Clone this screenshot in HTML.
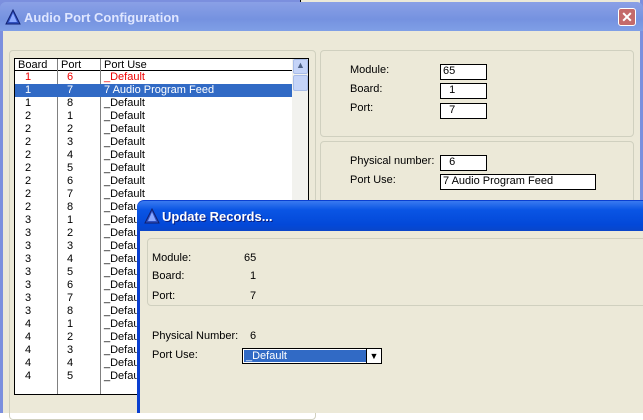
<!DOCTYPE html>
<html><head><style>
*{margin:0;padding:0;box-sizing:border-box}
body{width:643px;height:413px;overflow:hidden;background:#fff;font-family:"Liberation Sans",sans-serif;font-size:11px;position:relative}
.a{position:absolute}
.grp{position:absolute;border:1px solid #d0d0bf;border-radius:4px}
.inp{position:absolute;background:#fff;border:1px solid #000;padding-left:2px;line-height:13px;font-size:11px}
.row{position:absolute;left:0;width:278px;height:13px;line-height:13px}
.row span{position:absolute}
</style></head><body>
<div class="a" style="left:0;top:0;width:643px;height:413px;background:#7b8fde"></div>
<div class="a" style="left:300px;top:0;width:340px;height:3px;background:#ece9d8;border-left:1px solid #000"></div>
<div class="a" style="left:0;top:2px;width:643px;height:29px;background:linear-gradient(#8aa0e6,#7592e0 60%,#7f9fe6);border-radius:6px 6px 0 0"></div>
<svg class="a" style="left:5px;top:9px" width="16" height="16"><polygon points="8,1 15,15 1,15" fill="#3050c0" stroke="#102070"/><polygon points="8,4 12,13 4,13" fill="#8aa8ff"/></svg>
<div class="a" style="left:24px;top:10px;color:#dfe6ff;font-weight:bold;font-size:13px">Audio Port Configuration</div>
<div class="a" style="left:618px;top:8px;width:18px;height:18px;background:#c46a6a;border:1px solid #fff;border-radius:3px;color:#fff;text-align:center;line-height:16px;font-weight:bold;font-size:14px">✕</div>
<div class="a" style="left:3px;top:31px;width:637px;height:382px;background:#ece9d8"></div>
<div class="grp" style="left:9px;top:50px;width:307px;height:370px"></div>
<div class="a" style="left:14px;top:58px;width:295px;height:337px;background:#fff;border:1px solid #000"></div>
<div class="a" style="left:15px;top:59px;width:277px;height:12px;border-bottom:1px solid #000"></div>
<div class="a" style="left:57px;top:59px;width:1px;height:335px;background:#808080"></div>
<div class="a" style="left:100px;top:59px;width:1px;height:335px;background:#808080"></div>
<div class="a" style="left:18px;top:59px;line-height:12px">Board</div>
<div class="a" style="left:61px;top:59px;line-height:12px">Port</div>
<div class="a" style="left:104px;top:59px;line-height:12px">Port Use</div>
<div class="a" style="left:292px;top:59px;width:16px;height:335px;background:#f2f2ee"></div>
<div class="a" style="left:293px;top:59px;width:15px;height:15px;background:#c5d4f8;border:1px solid #a8bce8;border-radius:2px;font-size:9px;text-align:center;color:#4d6185">▲</div>
<div class="a" style="left:293px;top:75px;width:15px;height:16px;background:#c5d4f8;border:1px solid #a8bce8;border-radius:2px"></div>
<div class="a" style="left:15px;top:71px;width:277px;height:323px;overflow:hidden">
<div class="row" style="top:0;color:#e00"><span style="left:10px">1</span><span style="left:52px">6</span><span style="left:89px">_Default</span></div>
<div class="row" style="top:13px;background:#316ac5;color:#fff"><span style="left:10px">1</span><span style="left:52px">7</span><span style="left:89px">7 Audio Program Feed</span></div>
<div class="row" style="top:26px"><span style="left:10px">1</span><span style="left:52px">8</span><span style="left:89px">_Default</span></div>
<div class="row" style="top:39px"><span style="left:10px">2</span><span style="left:52px">1</span><span style="left:89px">_Default</span></div>
<div class="row" style="top:52px"><span style="left:10px">2</span><span style="left:52px">2</span><span style="left:89px">_Default</span></div>
<div class="row" style="top:65px"><span style="left:10px">2</span><span style="left:52px">3</span><span style="left:89px">_Default</span></div>
<div class="row" style="top:78px"><span style="left:10px">2</span><span style="left:52px">4</span><span style="left:89px">_Default</span></div>
<div class="row" style="top:91px"><span style="left:10px">2</span><span style="left:52px">5</span><span style="left:89px">_Default</span></div>
<div class="row" style="top:104px"><span style="left:10px">2</span><span style="left:52px">6</span><span style="left:89px">_Default</span></div>
<div class="row" style="top:117px"><span style="left:10px">2</span><span style="left:52px">7</span><span style="left:89px">_Default</span></div>
<div class="row" style="top:130px"><span style="left:10px">2</span><span style="left:52px">8</span><span style="left:89px">_Default</span></div>
<div class="row" style="top:143px"><span style="left:10px">3</span><span style="left:52px">1</span><span style="left:89px">_Default</span></div>
<div class="row" style="top:156px"><span style="left:10px">3</span><span style="left:52px">2</span><span style="left:89px">_Default</span></div>
<div class="row" style="top:169px"><span style="left:10px">3</span><span style="left:52px">3</span><span style="left:89px">_Default</span></div>
<div class="row" style="top:182px"><span style="left:10px">3</span><span style="left:52px">4</span><span style="left:89px">_Default</span></div>
<div class="row" style="top:195px"><span style="left:10px">3</span><span style="left:52px">5</span><span style="left:89px">_Default</span></div>
<div class="row" style="top:208px"><span style="left:10px">3</span><span style="left:52px">6</span><span style="left:89px">_Default</span></div>
<div class="row" style="top:221px"><span style="left:10px">3</span><span style="left:52px">7</span><span style="left:89px">_Default</span></div>
<div class="row" style="top:234px"><span style="left:10px">3</span><span style="left:52px">8</span><span style="left:89px">_Default</span></div>
<div class="row" style="top:247px"><span style="left:10px">4</span><span style="left:52px">1</span><span style="left:89px">_Default</span></div>
<div class="row" style="top:260px"><span style="left:10px">4</span><span style="left:52px">2</span><span style="left:89px">_Default</span></div>
<div class="row" style="top:273px"><span style="left:10px">4</span><span style="left:52px">3</span><span style="left:89px">_Default</span></div>
<div class="row" style="top:286px"><span style="left:10px">4</span><span style="left:52px">4</span><span style="left:89px">_Default</span></div>
<div class="row" style="top:299px"><span style="left:10px">4</span><span style="left:52px">5</span><span style="left:89px">_Default</span></div>
</div>
<div class="grp" style="left:320px;top:50px;width:314px;height:87px"></div>
<div class="a" style="left:350px;top:64px">Module:</div>
<div class="a" style="left:350px;top:83px">Board:</div>
<div class="a" style="left:350px;top:102px">Port:</div>
<div class="inp" style="left:440px;top:64px;width:47px;height:16px">65</div>
<div class="inp" style="left:440px;top:83px;width:47px;height:16px">&nbsp;&nbsp;1</div>
<div class="inp" style="left:440px;top:103px;width:47px;height:16px">&nbsp;&nbsp;7</div>
<div class="grp" style="left:320px;top:141px;width:314px;height:100px"></div>
<div class="a" style="left:350px;top:155px">Physical number:</div>
<div class="a" style="left:350px;top:174px">Port Use:</div>
<div class="inp" style="left:440px;top:155px;width:47px;height:16px">&nbsp;&nbsp;6</div>
<div class="inp" style="left:440px;top:174px;width:156px;height:16px">7 Audio Program Feed</div>
<!-- update dialog -->
<div class="a" style="left:137px;top:200px;width:510px;height:213px;background:#0a3fd0;border-radius:7px 0 0 0"></div>
<div class="a" style="left:137px;top:201px;width:510px;height:30px;background:linear-gradient(#3a7af0,#0a55e4 30%,#0348d8 80%,#0a46c8);border-radius:7px 0 0 0"></div>
<svg class="a" style="left:144px;top:208px" width="16" height="16"><polygon points="8,1 15,15 1,15" fill="#3050c0" stroke="#102070"/><polygon points="8,4 12,13 4,13" fill="#8aa8ff"/></svg>
<div class="a" style="left:162px;top:209px;color:#fff;font-weight:bold;font-size:13px;text-shadow:1px 1px #0a1e80">Update Records...</div>
<div class="a" style="left:140px;top:231px;width:503px;height:182px;background:#ece9d8"></div>
<div class="grp" style="left:147px;top:238px;width:500px;height:68px"></div>
<div class="a" style="left:152px;top:252px">Module:</div>
<div class="a" style="left:244px;top:252px">65</div>
<div class="a" style="left:152px;top:270px">Board:</div>
<div class="a" style="left:250px;top:270px">1</div>
<div class="a" style="left:152px;top:290px">Port:</div>
<div class="a" style="left:250px;top:290px">7</div>
<div class="a" style="left:152px;top:330px">Physical Number:</div>
<div class="a" style="left:250px;top:330px">6</div>
<div class="a" style="left:152px;top:349px">Port Use:</div>
<div class="a" style="left:242px;top:348px;width:140px;height:16px;border:1px solid #000;background:#fff"></div>
<div class="a" style="left:244px;top:350px;width:122px;height:12px;background:#316ac5;color:#fff;line-height:12px;padding-left:2px">_Default</div>
<div class="a" style="left:366px;top:349px;width:15px;height:14px;border-left:1px solid #000;text-align:center;font-size:9px;line-height:14px">▼</div>
</body></html>
